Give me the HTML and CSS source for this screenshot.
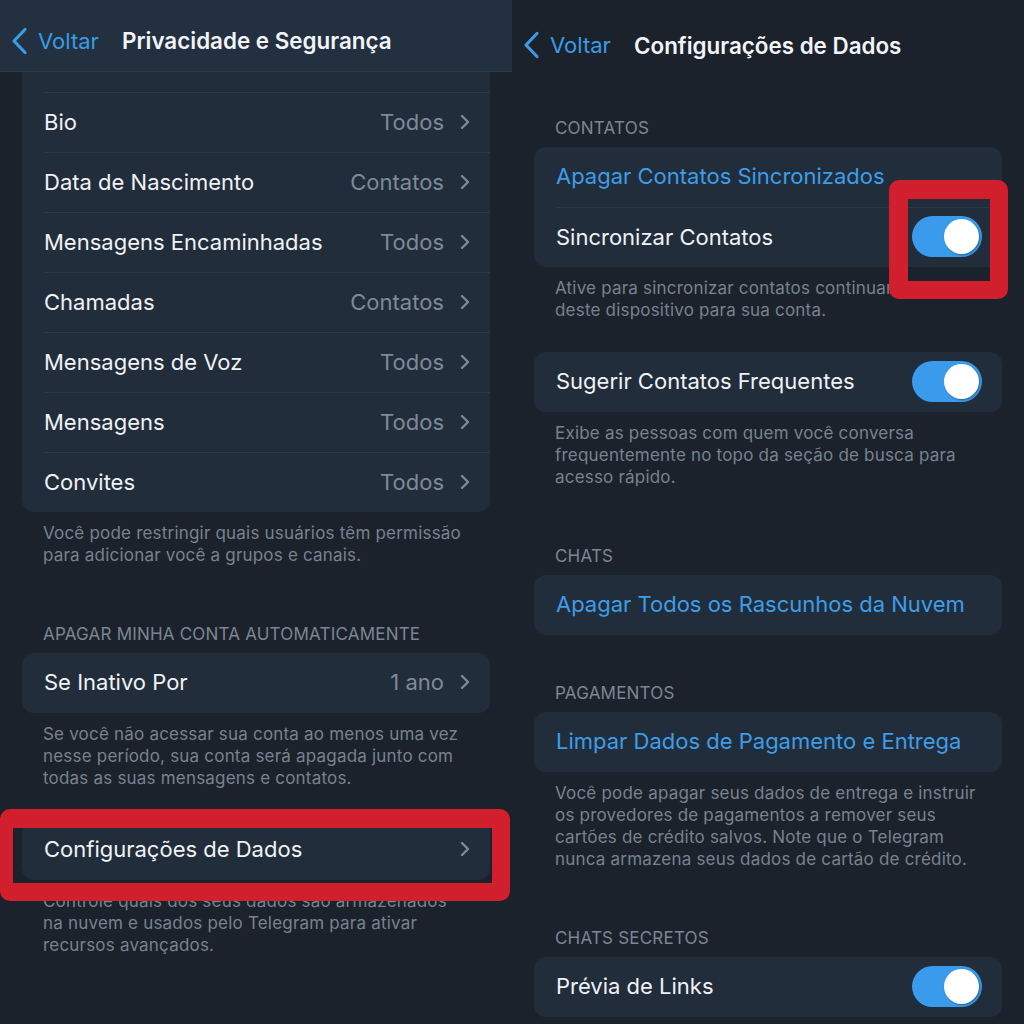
FILE: index.html
```html
<!DOCTYPE html>
<html>
<head>
<meta charset="utf-8">
<link rel="stylesheet" href="styles.css">
</head>
<body class="in_body">
  <div class="panel">
    <div class="nav nav_bar">
      <div class="back">
        <svg class="back_ico" width="18" height="28" viewBox="0 0 18 28"><path d="M15 2.5 L4 14 L15 25.5" fill="none" stroke="#3b9be6" stroke-width="3.2" stroke-linecap="round" stroke-linejoin="round"/></svg>
        <span>Voltar</span>
      </div>
      <div class="nav_title">Privacidade e Segurança</div>
    </div>

    <div class="group">
      <div class="card card_cut">
        <div class="row_stub"></div>
        <div class="row"><span class="lab">Bio</span><span class="val">Todos</span><svg class="chev" width="10" height="16" viewBox="0 0 10 16"><path d="M2 2 L8 8 L2 14" fill="none" stroke="#7e8a97" stroke-width="2.4" stroke-linecap="round" stroke-linejoin="round"/></svg></div>
        <div class="row"><span class="lab">Data de Nascimento</span><span class="val">Contatos</span><svg class="chev" width="10" height="16" viewBox="0 0 10 16"><path d="M2 2 L8 8 L2 14" fill="none" stroke="#7e8a97" stroke-width="2.4" stroke-linecap="round" stroke-linejoin="round"/></svg></div>
        <div class="row"><span class="lab">Mensagens Encaminhadas</span><span class="val">Todos</span><svg class="chev" width="10" height="16" viewBox="0 0 10 16"><path d="M2 2 L8 8 L2 14" fill="none" stroke="#7e8a97" stroke-width="2.4" stroke-linecap="round" stroke-linejoin="round"/></svg></div>
        <div class="row"><span class="lab">Chamadas</span><span class="val">Contatos</span><svg class="chev" width="10" height="16" viewBox="0 0 10 16"><path d="M2 2 L8 8 L2 14" fill="none" stroke="#7e8a97" stroke-width="2.4" stroke-linecap="round" stroke-linejoin="round"/></svg></div>
        <div class="row"><span class="lab">Mensagens de Voz</span><span class="val">Todos</span><svg class="chev" width="10" height="16" viewBox="0 0 10 16"><path d="M2 2 L8 8 L2 14" fill="none" stroke="#7e8a97" stroke-width="2.4" stroke-linecap="round" stroke-linejoin="round"/></svg></div>
        <div class="row"><span class="lab">Mensagens</span><span class="val">Todos</span><svg class="chev" width="10" height="16" viewBox="0 0 10 16"><path d="M2 2 L8 8 L2 14" fill="none" stroke="#7e8a97" stroke-width="2.4" stroke-linecap="round" stroke-linejoin="round"/></svg></div>
        <div class="row"><span class="lab">Convites</span><span class="val">Todos</span><svg class="chev" width="10" height="16" viewBox="0 0 10 16"><path d="M2 2 L8 8 L2 14" fill="none" stroke="#7e8a97" stroke-width="2.4" stroke-linecap="round" stroke-linejoin="round"/></svg></div>
      </div>
      <p class="note">Você pode restringir quais usuários têm permissão<br>para adicionar você a grupos e canais.</p>
    </div>

    <div class="group sp_57">
      <div class="sec">APAGAR MINHA CONTA AUTOMATICAMENTE</div>
      <div class="card">
        <div class="row"><span class="lab">Se Inativo Por</span><span class="val">1 ano</span><svg class="chev" width="10" height="16" viewBox="0 0 10 16"><path d="M2 2 L8 8 L2 14" fill="none" stroke="#7e8a97" stroke-width="2.4" stroke-linecap="round" stroke-linejoin="round"/></svg></div>
      </div>
      <p class="note">Se você não acessar sua conta ao menos uma vez<br>nesse período, sua conta será apagada junto com<br>todas as suas mensagens e contatos.</p>
    </div>

    <div class="group sp_31">
      <div class="card mark_wrap">
        <div class="row"><span class="lab">Configurações de Dados</span><span class="val"></span><svg class="chev" width="10" height="16" viewBox="0 0 10 16"><path d="M2 2 L8 8 L2 14" fill="none" stroke="#7e8a97" stroke-width="2.4" stroke-linecap="round" stroke-linejoin="round"/></svg></div>
        <div class="mark mark_row"></div>
      </div>
      <p class="note">Controle quais dos seus dados são armazenados<br>na nuvem e usados pelo Telegram para ativar<br>recursos avançados.</p>
    </div>
  </div>

  <div class="panel">
    <div class="nav nav_plain">
      <div class="back">
        <svg class="back_ico" width="18" height="28" viewBox="0 0 18 28"><path d="M15 2.5 L4 14 L15 25.5" fill="none" stroke="#3b9be6" stroke-width="3.2" stroke-linecap="round" stroke-linejoin="round"/></svg>
        <span>Voltar</span>
      </div>
      <div class="nav_title">Configurações de Dados</div>
    </div>

    <div class="group sp_27">
      <div class="sec">CONTATOS</div>
      <div class="card">
        <div class="row"><span class="lab link">Apagar Contatos Sincronizados</span></div>
        <div class="row"><span class="lab">Sincronizar Contatos</span><span class="toggle mark_wrap"><span class="knob"></span><span class="mark mark_tog"></span></span></div>
      </div>
      <p class="note">Ative para sincronizar contatos continuamente<br>deste dispositivo para sua conta.</p>
    </div>

    <div class="group sp_31">
      <div class="card">
        <div class="row"><span class="lab">Sugerir Contatos Frequentes</span><span class="toggle"><span class="knob"></span></span></div>
      </div>
      <p class="note">Exibe as pessoas com quem você conversa<br>frequentemente no topo da seção de busca para<br>acesso rápido.</p>
    </div>

    <div class="group sp_57">
      <div class="sec">CHATS</div>
      <div class="card">
        <div class="row"><span class="lab link">Apagar Todos os Rascunhos da Nuvem</span></div>
      </div>
    </div>

    <div class="group sp_47">
      <div class="sec">PAGAMENTOS</div>
      <div class="card">
        <div class="row"><span class="lab link">Limpar Dados de Pagamento e Entrega</span></div>
      </div>
      <p class="note">Você pode apagar seus dados de entrega e instruir<br>os provedores de pagamentos a remover seus<br>cartões de crédito salvos. Note que o Telegram<br>nunca armazena seus dados de cartão de crédito.</p>
    </div>

    <div class="group sp_57">
      <div class="sec">CHATS SECRETOS</div>
      <div class="card">
        <div class="row"><span class="lab">Prévia de Links</span><span class="toggle"><span class="knob"></span></span></div>
      </div>
    </div>
  </div>
</body>
</html>
```

FILE: styles.css
```css
.in_body
{
  margin:0;
  background-color:#1b222c;
  font-family:Inter, "Noto Sans", sans-serif;
  display:flex;
  width:1024px;
  height:1024px;
  overflow:hidden;
}
.panel
{
  width:512px;
  height:1024px;
  overflow:hidden;
  position:relative;
}
.nav
{
  display:flex;
  align-items:center;
  padding-left:10px;
  box-sizing:border-box;
}
.nav_bar
{
  height:72px;
  padding-top:10px;
  background-color:#233040;
  border-bottom:1px solid #2e3b4b;
}
.nav_plain
{
  height:90px;
}
.back
{
  display:flex;
  align-items:center;
  color:#3b9be6;
  font-size:22px;
  width:112px;
}
.back_ico
{
  margin-right:10px;
}
.nav_title
{
  color:#f2f4f7;
  font-size:22.4px;
  font-weight:600;
}
.group
{
  margin:0 22px;
}
.sp_27
{
  margin-top:27px;
}
.sp_31
{
  margin-top:31px;
}
.sp_47
{
  margin-top:47px;
}
.sp_57
{
  margin-top:57px;
}
.card
{
  background-color:#222d3b;
  border-radius:12px;
}
.card_cut
{
  border-radius:0 0 12px 12px;
}
.row_stub
{
  height:20px;
}
.row
{
  display:flex;
  align-items:center;
  height:60px;
  margin-left:22px;
  padding-right:20px;
  padding-bottom:2px;
  border-top:1px solid #2c3847;
  box-sizing:border-box;
}
.card > .row:first-child
{
  border-top:none;
}
.lab
{
  flex:1;
  color:#f0f2f5;
  font-size:22px;
  white-space:nowrap;
}
.link
{
  color:#3d9de8;
}
.val
{
  color:#7e8a97;
  font-size:22px;
}
.chev
{
  margin-left:16px;
}
.note
{
  margin:0;
  padding:10px 0 0 21px;
  color:#78828f;
  font-size:17px;
  letter-spacing:0.2px;
  line-height:22px;
  white-space:nowrap;
}
.sec
{
  padding-left:21px;
  color:#7c8692;
  font-size:17px;
  letter-spacing:0.2px;
  line-height:22px;
  margin-bottom:8px;
}
.toggle
{
  position:relative;
  width:70px;
  height:41px;
  border-radius:21px;
  background-color:#3a9bec;
}
.knob
{
  position:absolute;
  right:3px;
  top:3px;
  width:35px;
  height:35px;
  border-radius:50%;
  background-color:#ffffff;
  box-shadow:1px 1px 2px rgba(0,0,0,0.35);
}
.mark_wrap
{
  position:relative;
}
.mark
{
  position:absolute;
  border-style:solid;
  border-color:#d21f2d;
  border-radius:10px;
}
.mark_row
{
  left:-22px;
  right:-20px;
  top:-11px;
  bottom:-21px;
  border-width:19px 18px 18px 13px;
}
.mark_tog
{
  left:-23px;
  right:-26px;
  top:-36px;
  bottom:-42px;
  border-width:19px 18px 18px 19px;
}
```
